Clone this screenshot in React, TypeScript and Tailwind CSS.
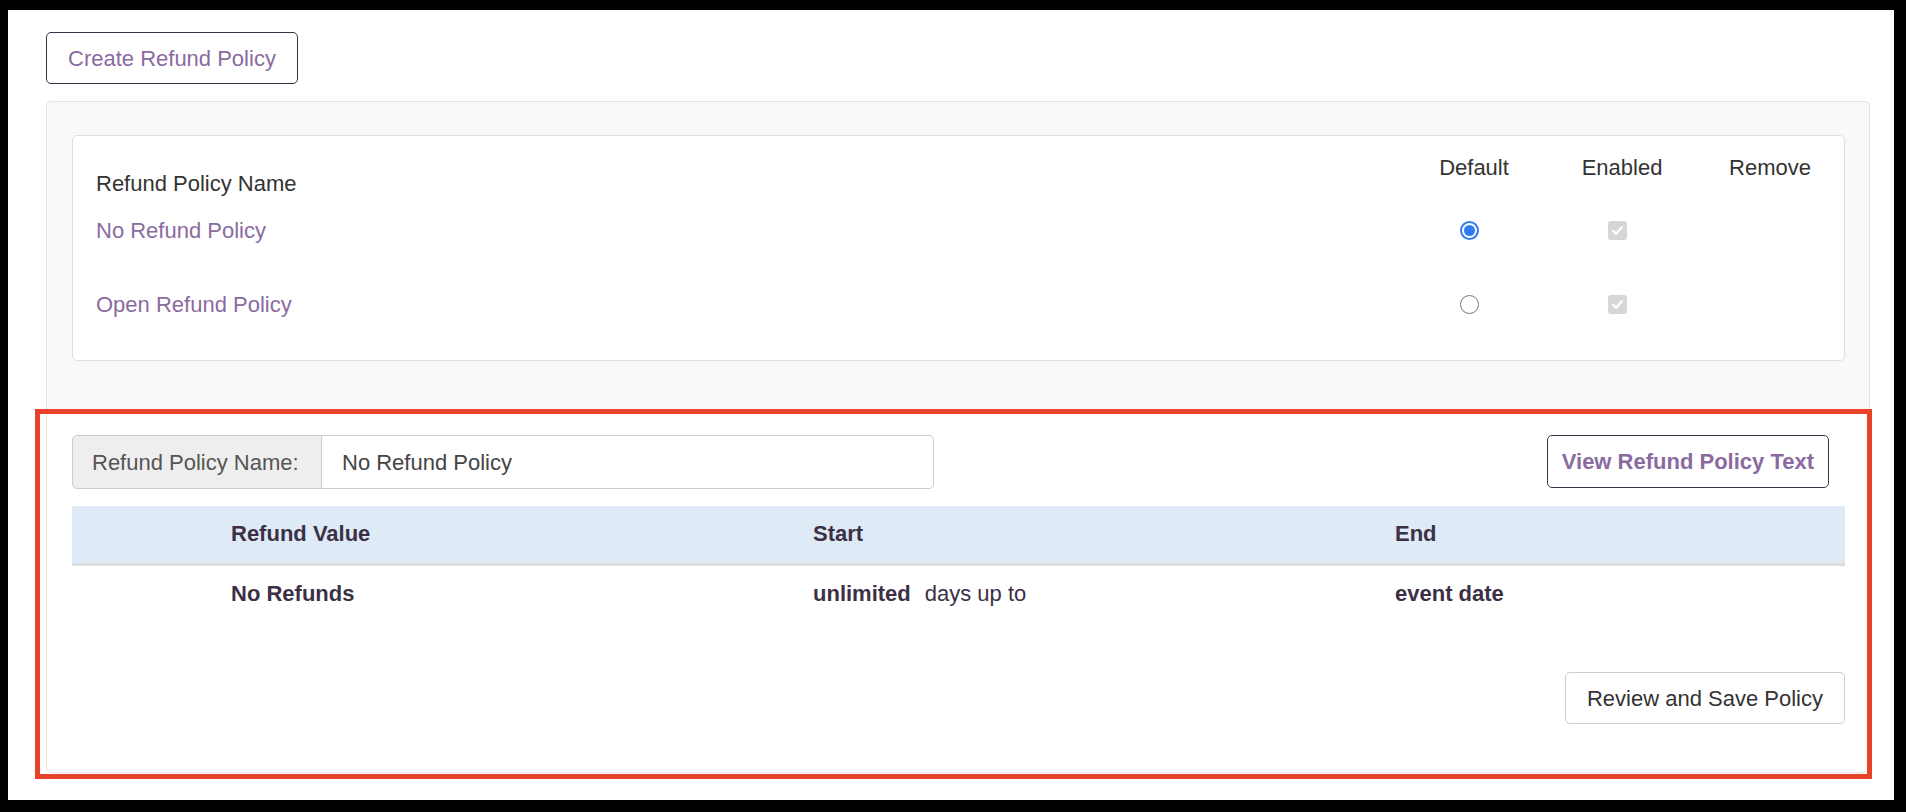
import React from "react";

const policies = [
  { name: "No Refund Policy", isDefault: true },
  { name: "Open Refund Policy", isDefault: false },
];

function Radio({ checked }: { checked: boolean }) {
  if (checked) {
    return (
      <span className="mr-[9px] flex h-[19px] w-[19px] items-center justify-center rounded-full border-2 border-[#2f7bf5] bg-white">
        <span className="h-[11px] w-[11px] rounded-full bg-[#2f7bf5]" />
      </span>
    );
  }
  return <span className="mr-[9px] block h-[19px] w-[19px] rounded-full border-[1.5px] border-[#777777] bg-white" />;
}

function DisabledCheck() {
  return (
    <span className="mr-[9px] flex h-[19px] w-[19px] items-center justify-center rounded-[3px] bg-[#d6d6d6]">
      <svg width="13" height="13" viewBox="0 0 13 13" fill="none">
        <path d="M2.2 6.9 L5.1 9.8 L10.9 3.2" stroke="#ffffff" strokeWidth="2.2" strokeLinecap="round" strokeLinejoin="round" />
      </svg>
    </span>
  );
}

export default function App() {
  return (
    <div className="min-h-screen bg-black pt-[10px] pr-[12px] pb-[12px] pl-[8px] font-['Liberation_Sans',Arial,sans-serif] text-[22px] leading-[33px]">
      <div className="h-[790px] bg-white pt-[22px] pl-[38px]">
        <button className="h-[52px] rounded-[5px] border border-[#3d3148] bg-white px-[21px] text-[#8a6b9f]">
          Create Refund Policy
        </button>

        <div className="mt-[17px] w-[1824px] rounded-[5px] border border-[#e3e3e3] bg-[#f9f9f9]">
          {/* policy list */}
          <div className="pt-[33px] pr-[24px] pb-[51px] pl-[25px]">
            <div className="rounded-[5px] border border-[#dddddd] bg-white pb-[39px] pl-[23px]">
              <div className="grid grid-cols-[1fr_148px_148px_148px] pt-[15px] text-[#333333]">
                <div className="pt-[16px]">Refund Policy Name</div>
                <div className="text-center">Default</div>
                <div className="text-center">Enabled</div>
                <div className="text-center">Remove</div>
              </div>
              {policies.map((p, i) => (
                <div
                  key={p.name}
                  className={`grid grid-cols-[1fr_148px_148px_148px] ${i === 0 ? "mt-[14px]" : "mt-[41px]"}`}
                >
                  <div className="text-[#8a6b9f]">{p.name}</div>
                  <div className="flex items-center justify-center">
                    <Radio checked={p.isDefault} />
                  </div>
                  <div className="flex items-center justify-center">
                    <DisabledCheck />
                  </div>
                  <div />
                </div>
              ))}
            </div>
          </div>

          {/* policy editor */}
          <section className="relative rounded-b-[5px] bg-white pt-[23px] pr-[24px] pb-[48px] pl-[25px]">
            <div className="flex items-start justify-between">
              <div className="flex h-[54px]">
                <div className="flex w-[250px] items-center rounded-l-[5px] border border-[#cccccc] bg-[#eeeeee] pl-[19px] text-[#555555]">
                  Refund Policy Name:
                </div>
                <div className="flex w-[612px] items-center rounded-r-[5px] border-y border-r border-[#cccccc] pl-[20px] text-[#444444]">
                  No Refund Policy
                </div>
              </div>
              <button className="mr-[16px] h-[53px] rounded-[5px] border border-[#3d3148] bg-white px-[14px] font-bold text-[#8a6b9f]">
                View Refund Policy Text
              </button>
            </div>

            <div className="mt-[17px] text-[#3b3045]">
              <div className="grid h-[60px] grid-cols-[159px_582px_582px_1fr] border-b-[3px] border-[#dddddd] bg-[#deebf7] pt-[11px] font-bold">
                <div />
                <div>Refund Value</div>
                <div>Start</div>
                <div>End</div>
              </div>
              <div className="grid grid-cols-[159px_582px_582px_1fr] pt-[11px] pb-[12px]">
                <div />
                <div className="font-bold">No Refunds</div>
                <div>
                  <span className="font-bold">unlimited</span>
                  <span className="ml-[14px]">days up to</span>
                </div>
                <div className="font-bold">event date</div>
              </div>
            </div>

            <div className="mt-[50px] flex justify-end">
              <button className="h-[52px] rounded-[5px] border border-[#cccccc] bg-white px-[21px] text-[#333333]">
                Review and Save Policy
              </button>
            </div>

            <div className="pointer-events-none absolute top-[-3px] right-[-3px] bottom-[-7px] left-[-12px] border-[5px] border-[#e8432a]" />
          </section>
        </div>
      </div>
    </div>
  );
}
